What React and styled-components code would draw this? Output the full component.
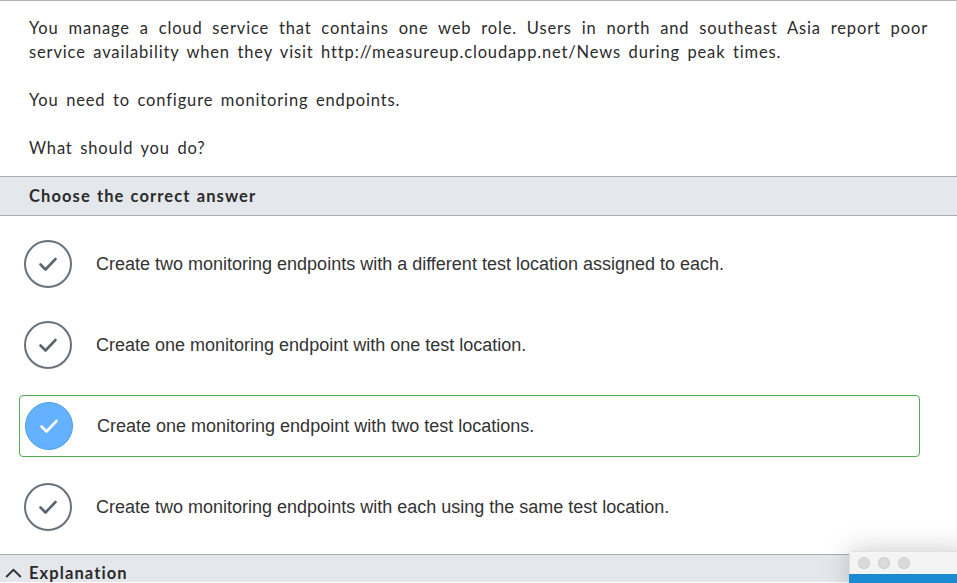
import styled, { createGlobalStyle } from "styled-components";

const GlobalStyle = createGlobalStyle`
  html, body {
    margin: 0;
    padding: 0;
    background: #ffffff;
    overflow: hidden;
  }
`;

const Page = styled.div`
  position: relative;
  width: 957px;
  height: 583px;
  overflow: hidden;
  background: #ffffff;
  color: #333333;
`;

// 문제 본문
const Question = styled.div`
  border-top: 1px solid #b4b4b4;
  border-right: 1px solid #d6d6d6;
  padding: 15px 28px 16px 29px;
  font-family: Lato, "Open Sans", sans-serif;
  font-size: 16.5px;
  letter-spacing: 0.85px;
  word-spacing: 2.5px;
  line-height: 24px;
  color: #2b2b2b;
`;

const Para = styled.p`
  margin: 0 0 24px;
  text-align: justify;
  &:last-child {
    margin-bottom: 0;
  }
`;

// 회색 헤더 바
const SectionBar = styled.div`
  display: flex;
  align-items: center;
  gap: 7px;
  height: ${(p) => p.$height}px;
  box-sizing: border-box;
  padding: ${(p) => p.$top}px 0 0 ${(p) => p.$indent}px;
  background: #e4e8ec;
  border-top: 1px solid #a9acaf;
  border-bottom: ${(p) => (p.$closed ? "1px solid #a9acaf" : "none")};
  font-family: Lato, "Open Sans", sans-serif;
  font-weight: 700;
  font-size: 16.5px;
  line-height: 16px;
  letter-spacing: 1.1px;
  word-spacing: 1px;
  color: #2b2b2b;
`;

const OptionList = styled.div`
  display: flex;
  flex-direction: column;
  gap: 19px;
  padding: 17px 0 16px;
`;

const Option = styled.div`
  display: flex;
  align-items: center;
  width: 901px;
  height: 62px;
  box-sizing: border-box;
  margin-left: 19px;
  padding-left: ${(p) => (p.$selected ? 5 : 4)}px;
  border: 1px solid ${(p) => (p.$selected ? "#4cae4c" : "transparent")};
  border-radius: 4px;
`;

const OptionText = styled.span`
  margin-left: 24px;
  font-family: "Liberation Sans", Arial, sans-serif;
  font-size: 18px;
  color: #333333;
`;

const Chevron = styled.svg`
  display: block;
`;

// 오른쪽 아래 작은 창
const MiniWindow = styled.div`
  position: absolute;
  left: 849px;
  top: 551px;
  width: 120px;
  height: 40px;
  border-radius: 5px 0 0 0;
  overflow: hidden;
  box-shadow: 0 0 28px rgba(0, 0, 0, 0.22);
  display: flex;
  flex-direction: column;
`;

const TitleBar = styled.div`
  display: flex;
  align-items: center;
  gap: 8px;
  height: 22px;
  padding-left: 8px;
  background: #f4f4f4;
  border-top: 1px solid #e0e0e0;
  border-left: 1px solid #e0e0e0;
`;

const Light = styled.span`
  width: 12px;
  height: 12px;
  border-radius: 50%;
  background: #dadada;
  box-shadow: inset 0 0 0 1px #d0d0d0;
`;

const BlueBody = styled.div`
  flex: 1;
  background: #1a8ad4;
`;

const CheckCircle = ({ selected }) => (
  <svg width="48" height="48" viewBox="0 0 48 48">
    <circle
      cx="24"
      cy="24"
      r={selected ? 23.5 : 23}
      fill={selected ? "#63b1ff" : "none"}
      stroke={selected ? "#4f9ee6" : "#66717c"}
      strokeWidth={selected ? 1 : 2}
    />
    <polyline
      points="16.5,24.5 21.5,29.5 31.5,19"
      fill="none"
      stroke={selected ? "#ffffff" : "#5c6670"}
      strokeWidth="2.6"
      strokeLinecap="round"
      strokeLinejoin="round"
    />
  </svg>
);

const answers = [
  "Create two monitoring endpoints with a different test location assigned to each.",
  "Create one monitoring endpoint with one test location.",
  "Create one monitoring endpoint with two test locations.",
  "Create two monitoring endpoints with each using the same test location.",
];

const App = () => {
  return (
    <Page>
      <GlobalStyle />
      <Question>
        <Para>
          You manage a cloud service that contains one web role. Users in north
          and southeast Asia report poor service availability when they visit
          http://measureup.cloudapp.net/News during peak times.
        </Para>
        <Para>You need to configure monitoring endpoints.</Para>
        <Para>What should you do?</Para>
      </Question>
      <SectionBar $height={40} $top={0} $indent={29} $closed>
        Choose the correct answer
      </SectionBar>
      <OptionList>
        {answers.map((a, i) => (
          <Option key={i} $selected={i === 2}>
            <CheckCircle selected={i === 2} />
            <OptionText>{a}</OptionText>
          </Option>
        ))}
      </OptionList>
      <SectionBar $height={28} $top={9} $indent={5}>
        <Chevron width="17" height="10" viewBox="0 0 17 10">
          <polyline
            points="1.2,9 8.5,1.8 15.8,9"
            fill="none"
            stroke="#333"
            strokeWidth="2"
          />
        </Chevron>
        Explanation
      </SectionBar>
      <MiniWindow>
        <TitleBar>
          <Light />
          <Light />
          <Light />
        </TitleBar>
        <BlueBody />
      </MiniWindow>
    </Page>
  );
};

export default App;
